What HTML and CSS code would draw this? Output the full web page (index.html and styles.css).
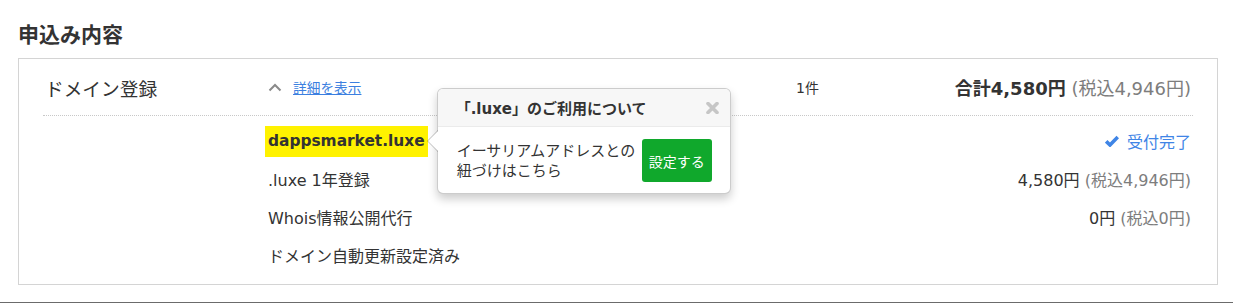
FILE: index.html
```html
<!DOCTYPE html>
<html lang="ja">
<head>
<meta charset="utf-8">
<title>申込み内容</title>
<link rel="stylesheet" href="styles.css">
</head>
<body>
<div class="page">
  <h2 class="section-title">申込み内容</h2>
  <div class="order-box">
    <div class="summary">
      <div class="summary-name">ドメイン登録</div>
      <div class="summary-toggle">
        <svg class="chevron" width="14" height="9" viewBox="0 0 14 9"><polyline points="1.5,7.5 7,2 12.5,7.5" fill="none" stroke="#8a8a8a" stroke-width="2"/></svg>
        <a class="detail-link" href="#">詳細を表示</a>
      </div>
      <div class="summary-count">1件</div>
      <div class="summary-total"><strong>合計4,580円</strong> <span class="tax">(税込4,946円)</span></div>
    </div>
    <div class="items">
      <div class="item">
        <div class="item-label">
          <span class="domain">dappsmarket.luxe
            <span class="popover">
              <span class="popover-head">
                <span class="popover-title">「.luxe」のご利用について</span>
                <svg class="popover-close" width="13" height="12" viewBox="0 0 13 12"><path d="M2 1.5 L11 10.5 M11 1.5 L2 10.5" stroke="#c6c6c6" stroke-width="3.6" stroke-linecap="round"/></svg>
              </span>
              <span class="popover-body">
                <span class="popover-text">イーサリアムアドレスとの<br>紐づけはこちら</span>
                <span class="popover-btn">設定する</span>
              </span>
            </span>
          </span>
        </div>
        <div class="item-value status"><svg class="check" width="14" height="12" viewBox="0 0 14 12"><path d="M1.2 6.3 L5 10 L12.8 2" fill="none" stroke="#3f85e6" stroke-width="3.6" stroke-linejoin="miter"/></svg>受付完了</div>
      </div>
      <div class="item">
        <div class="item-label">.luxe 1年登録</div>
        <div class="item-value">4,580円 <span class="tax">(税込4,946円)</span></div>
      </div>
      <div class="item">
        <div class="item-label">Whois情報公開代行</div>
        <div class="item-value">0円 <span class="tax">(税込0円)</span></div>
      </div>
      <div class="item">
        <div class="item-label">ドメイン自動更新設定済み</div>
      </div>
    </div>
  </div>
  <div class="page-rule"></div>
</div>
</body>
</html>
```
FILE: styles.css
```css
html, body {
  margin: 0;
  padding: 0;
  background: #fff;
}
body {
  font-family: "DejaVu Sans", "Noto Sans CJK JP", sans-serif;
  color: #333;
  overflow: hidden;
}
.page {
  padding: 20px 0 0 0;
}
.section-title {
  margin: 0 0 8px 18px;
  font-size: 21px;
  line-height: 30px;
  font-weight: bold;
  color: #333;
}
.order-box {
  margin: 0 15px 0 18px;
  border: 1px solid #d4d4d4;
  padding: 0 24px 10px 24px;
}
.summary {
  display: flex;
  align-items: center;
  height: 56px;
  border-bottom: 1px dotted #c8c8c8;
}
.summary-name {
  width: 223px;
  padding-left: 2px;
  font-size: 18.7px;
  color: #333;
}
.summary-toggle {
  width: 528px;
  display: flex;
  align-items: center;
}
.chevron {
  display: block;
  margin-right: 11px;
}
.detail-link {
  font-size: 13.7px;
  color: #3b7fe0;
  text-decoration: underline;
}
.summary-count {
  flex: 1;
  font-size: 14px;
}
.summary-total {
  font-size: 18px;
  padding-right: 2px;
}
.summary-total strong {
  color: #333;
}
.tax {
  color: #7d7d7d;
}
.items {
  padding-top: 6px;
}
.item {
  display: flex;
  align-items: center;
  justify-content: space-between;
  height: 38px;
  padding-left: 225px;
  padding-right: 2px;
  font-size: 16px;
}
.domain {
  position: relative;
  display: inline-block;
  margin-left: -3px;
  padding: 0 3px;
  line-height: 31px;
  background: #fff200;
  font-weight: bold;
  font-size: 15.4px;
  color: #333;
}
.popover {
  position: absolute;
  left: calc(100% + 9px);
  top: 50%;
  margin-top: -53px;
  width: 292px;
  border: 1px solid rgba(0, 0, 0, 0.2);
  border-radius: 6px;
  background: #fff;
  box-shadow: 0 5px 10px rgba(0, 0, 0, 0.2);
  font-weight: normal;
  line-height: normal;
  z-index: 5;
}
.popover::before {
  content: "";
  position: absolute;
  left: -11px;
  top: 50%;
  margin-top: -11px;
  border-style: solid;
  border-width: 11px 11px 11px 0;
  border-color: transparent rgba(0, 0, 0, 0.25) transparent transparent;
}
.popover::after {
  content: "";
  position: absolute;
  left: -10px;
  top: 50%;
  margin-top: -10px;
  border-style: solid;
  border-width: 10px 10px 10px 0;
  border-color: transparent #fff transparent transparent;
}
.popover-head {
  display: flex;
  align-items: center;
  justify-content: space-between;
  height: 37px;
  padding: 0 11px 0 18px;
  background: #f7f7f7;
  border-bottom: 1px solid #ebebeb;
  border-radius: 5px 5px 0 0;
}
.popover-title {
  font-size: 15px;
  font-weight: bold;
  color: #333;
}
.popover-close {
  display: block;
}
.popover-body {
  display: flex;
  align-items: center;
  padding: 12px 18px 11px 19px;
  gap: 5px;
}
.popover-text {
  flex: 1;
  font-size: 15px;
  line-height: 20px;
  color: #333;
  white-space: nowrap;
}
.popover-btn {
  display: flex;
  align-items: center;
  justify-content: center;
  width: 70px;
  height: 43px;
  border-radius: 3px;
  background: #10a82c;
  color: #fff;
  font-size: 14px;
}
.item-value {
  color: #333;
}
.status {
  display: flex;
  align-items: center;
  color: #3f85e6;
}
.check {
  display: block;
  margin-right: 8px;
}
.page-rule {
  margin-top: 17px;
  border-top: 1px solid #6b6b6b;
}
```
